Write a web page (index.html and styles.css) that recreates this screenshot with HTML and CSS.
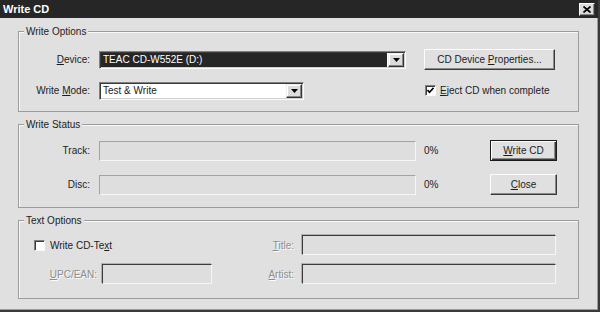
FILE: index.html
```html
<!DOCTYPE html>
<html lang="en">
<head>
    <meta charset="UTF-8">
    <title>Write CD</title>
    <link rel="stylesheet" href="styles.css">
</head>
<body>
    <div class="window">
        <div class="titlebar">
            <span class="title">Write CD</span>
            <button class="close-btn">
                <svg width="8" height="7" viewBox="0 0 8 7"><path d="M0.5 0.5 L7.5 6.5 M7.5 0.5 L0.5 6.5" stroke="#000" stroke-width="1.7"/></svg>
            </button>
        </div>

        <div class="content">
            <!-- write options -->
            <fieldset class="group group-options">
                <legend>Write Options</legend>
                <div class="row">
                    <span class="lbl"><u>D</u>evice:</span>
                    <div class="combo combo-device">
                        <span class="combo-value">TEAC CD-W552E (D:)</span>
                        <span class="combo-btn"><svg width="7" height="4" viewBox="0 0 7 4"><path d="M0 0 H7 L3.5 4 Z" fill="#000"/></svg></span>
                    </div>
                    <button class="btn btn-props">CD Device <u>P</u>roperties...</button>
                </div>
                <div class="row">
                    <span class="lbl">Write <u>M</u>ode:</span>
                    <div class="combo combo-mode">
                        <span class="combo-value">Test &amp; Write</span>
                        <span class="combo-btn"><svg width="7" height="4" viewBox="0 0 7 4"><path d="M0 0 H7 L3.5 4 Z" fill="#000"/></svg></span>
                    </div>
                    <label class="check check-eject">
                        <span class="check-box"><svg width="7" height="7" viewBox="0 0 7 7"><path d="M0.5 3 L2.5 5.2 L6.5 0.8" stroke="#000" stroke-width="1.6" fill="none"/></svg></span>
                        <span><u>E</u>ject CD when complete</span>
                    </label>
                </div>
            </fieldset>

            <!-- write status -->
            <fieldset class="group group-status">
                <legend>Write Status</legend>
                <div class="row">
                    <span class="lbl">Track:</span>
                    <div class="progress"></div>
                    <span class="pct">0%</span>
                    <button class="btn btn-action btn-default"><u>W</u>rite CD</button>
                </div>
                <div class="row">
                    <span class="lbl">Disc:</span>
                    <div class="progress"></div>
                    <span class="pct">0%</span>
                    <button class="btn btn-action"><u>C</u>lose</button>
                </div>
            </fieldset>

            <!-- text options -->
            <fieldset class="group group-text">
                <legend>Text Options</legend>
                <div class="row">
                    <div class="col-left">
                        <label class="check check-cdtext">
                            <span class="check-box"></span>
                            <span>Write CD-Te<u>x</u>t</span>
                        </label>
                    </div>
                    <span class="lbl-side disabled"><u>T</u>itle:</span>
                    <div class="field field-wide"></div>
                </div>
                <div class="row">
                    <div class="col-left">
                        <span class="lbl-upc disabled"><u>U</u>PC/EAN:</span>
                        <div class="field field-upc"></div>
                    </div>
                    <span class="lbl-side disabled"><u>A</u>rtist:</span>
                    <div class="field field-wide"></div>
                </div>
            </fieldset>
        </div>
    </div>
</body>
</html>
```

FILE: styles.css
```css
body {
    margin: 0;
    background-color: #e0e0e0;
    font-family: "Liberation Sans", Arial, sans-serif;
    font-size: 10px;
    color: #1c1c1c;
}

.window {
    width: 600px;
    height: 312px;
    box-sizing: border-box;
    border-right: 2px solid #3a3a3a;
    border-bottom: 2px solid #3a3a3a;
    box-shadow: inset -1px -1px #9c9c9c;
    background-color: #e0e0e0;
}

.titlebar {
    height: 18px;
    background-color: #262626;
    display: flex;
    align-items: center;
    justify-content: space-between;
    padding: 0 3px 0 3px;
}
.title {
    color: #ffffff;
    font-weight: bold;
    font-size: 11px;
}
.close-btn {
    width: 16px;
    height: 13px;
    padding: 0;
    background-color: #dcdcdc;
    border: 1px solid;
    border-color: #fafafa #333333 #333333 #fafafa;
    box-shadow: inset -1px -1px #888888;
    display: flex;
    align-items: center;
    justify-content: center;
}

.content {
    padding: 7px 0 0 18px;
}

/* group boxes */
.group {
    margin: 0;
    width: 561px;
    min-inline-size: 0;
    box-sizing: border-box;
    border: 1px solid #9c9c9c;
    box-shadow: inset 1px 1px #f8f8f8;
}
.group legend {
    margin-left: 5px;
    padding: 0 2px;
    line-height: 13px;
    background-color: #e0e0e0;
}
.group-options {
    padding: 11px 0 10px;
}
.group-status {
    margin-top: 6px;
    padding: 9px 0 12px;
}
.group-text {
    margin-top: 6px;
    padding: 8px 0 14px;
}

.row {
    display: flex;
    align-items: center;
    height: 21px;
}
.group-options .row + .row {
    margin-top: 10px;
}
.group-status .row + .row {
    margin-top: 13px;
}
.group-text .row {
    height: 20px;
}
.group-text .row + .row {
    margin-top: 9px;
}

.lbl {
    flex: none;
    width: 71px;
    margin-right: 9px;
    text-align: right;
}

/* combo boxes */
.combo {
    flex: none;
    display: flex;
    height: 18px;
    box-sizing: border-box;
    padding: 1px;
    border: 1px solid;
    border-color: #808080 #fafafa #fafafa #808080;
    box-shadow: inset 1px 1px #3a3a3a, inset -1px -1px #d0d0d0;
    background-color: #ffffff;
}
.combo-device {
    width: 307px;
}
.combo-mode {
    width: 205px;
}
.combo-value {
    flex: 1;
    padding-left: 2px;
    line-height: 14px;
    white-space: nowrap;
}
.combo-device .combo-value {
    background-color: #262626;
    color: #ffffff;
    margin-right: 1px;
}
.combo-btn {
    width: 16px;
    box-sizing: border-box;
    border: 1px solid;
    border-color: #eeeeee #333333 #333333 #eeeeee;
    box-shadow: inset -1px -1px #888888, inset 1px 1px #ffffff;
    background-color: #dcdcdc;
    display: flex;
    align-items: center;
    justify-content: center;
}

/* buttons */
.btn {
    flex: none;
    font: inherit;
    color: inherit;
    height: 21px;
    padding: 0;
    background-color: #e0e0e0;
    border: 1px solid;
    border-color: #fcfcfc #3a3a3a #3a3a3a #fcfcfc;
    box-shadow: inset -1px -1px #8a8a8a;
}
.btn-props {
    width: 131px;
    margin-left: 18px;
}
.btn-action {
    width: 67px;
}
.btn-default {
    border-color: #1a1a1a;
    box-shadow: inset 1px 1px #fcfcfc, inset -1px -1px #3a3a3a, inset -2px -2px #8a8a8a;
}

/* checkboxes */
.check {
    display: flex;
    align-items: center;
    gap: 4px;
}
.check-box {
    width: 11px;
    height: 11px;
    box-sizing: border-box;
    border: 1px solid;
    border-color: #808080 #fafafa #fafafa #808080;
    box-shadow: inset 1px 1px #3a3a3a;
    background-color: #ffffff;
    display: flex;
    align-items: center;
    justify-content: center;
}
.check-eject {
    margin-left: 121px;
}
.check-cdtext {
    margin-left: 15px;
    gap: 5px;
}

/* status */
.progress {
    flex: none;
    width: 317px;
    height: 20px;
    box-sizing: border-box;
    border: 1px solid;
    border-color: #a4a4a4 #f6f6f6 #f6f6f6 #a4a4a4;
    background-color: #dedede;
}
.pct {
    flex: none;
    width: 66px;
    margin-left: 8px;
}

/* text options */
.col-left {
    flex: none;
    width: 245px;
    display: flex;
    align-items: center;
}
.disabled {
    color: #8c8c8c;
    text-shadow: 1px 1px #fcfcfc;
}
.lbl-side {
    flex: none;
    width: 30px;
    margin-right: 8px;
    text-align: right;
}
.lbl-upc {
    flex: none;
    width: 78px;
    margin-right: 5px;
    text-align: right;
}
.field {
    flex: none;
    height: 20px;
    box-sizing: border-box;
    border: 1px solid;
    border-color: #3c3c3c #f6f6f6 #f6f6f6 #3c3c3c;
    box-shadow: -1px -1px #b0b0b0;
    background-color: #dedede;
}
.field-wide {
    width: 254px;
}
.field-upc {
    width: 110px;
}
```
